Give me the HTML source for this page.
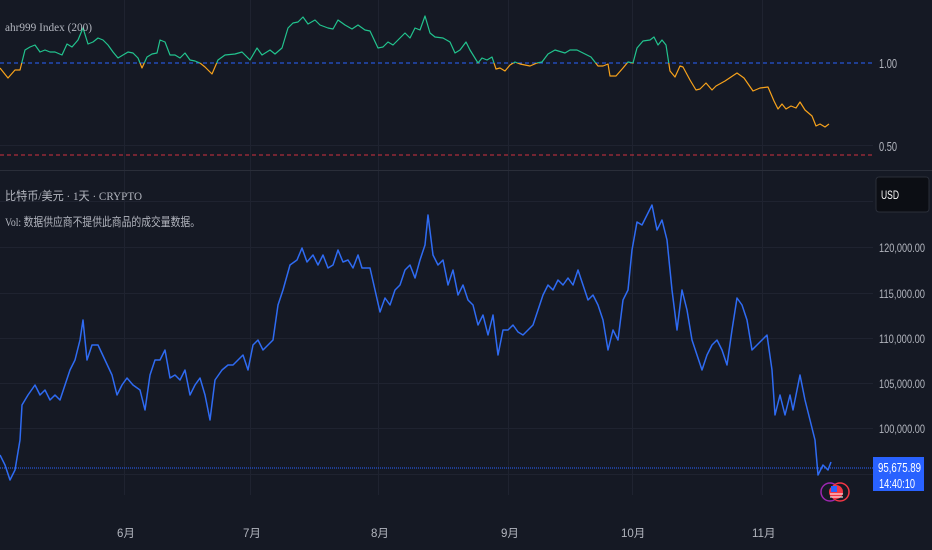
<!DOCTYPE html>
<html><head><meta charset="utf-8"><style>
html,body{margin:0;padding:0;background:#151924;width:932px;height:550px;overflow:hidden}
svg{display:block}
text{font-family:"Liberation Sans","Noto Sans CJK SC",sans-serif;fill:#b2b5be;font-size:11.5px}
.lg{font-family:"Liberation Serif","Noto Sans CJK SC",serif;font-size:12px;fill:#b2b5be}
.ax{font-size:13px}
</style></head><body>
<svg width="932" height="550" viewBox="0 0 932 550">
<rect width="932" height="550" fill="#151924"/>
<g stroke="#1f2330" stroke-width="1">
<line x1="124.5" y1="0" x2="124.5" y2="495"/>
<line x1="250.5" y1="0" x2="250.5" y2="495"/>
<line x1="378.5" y1="0" x2="378.5" y2="495"/>
<line x1="508.5" y1="0" x2="508.5" y2="495"/>
<line x1="632.5" y1="0" x2="632.5" y2="495"/>
<line x1="762.5" y1="0" x2="762.5" y2="495"/>
<line x1="0" y1="145.5" x2="873" y2="145.5"/>
<line x1="0" y1="201.5" x2="873" y2="201.5"/>
<line x1="0" y1="247.5" x2="873" y2="247.5"/>
<line x1="0" y1="293.5" x2="873" y2="293.5"/>
<line x1="0" y1="338.5" x2="873" y2="338.5"/>
<line x1="0" y1="383.5" x2="873" y2="383.5"/>
<line x1="0" y1="428.5" x2="873" y2="428.5"/>
<line x1="0" y1="474.5" x2="873" y2="474.5"/>
</g>
<line x1="0" y1="170.5" x2="932" y2="170.5" stroke="#2a2e39" stroke-width="1"/>
<line x1="0" y1="63" x2="873" y2="63" stroke="#2962ff" stroke-width="1" stroke-dasharray="4 3"/>
<line x1="0" y1="155" x2="873" y2="155" stroke="#f23645" stroke-width="1" stroke-dasharray="4 3" opacity="0.85"/>
<defs>
<clipPath id="above"><rect x="0" y="0" width="873" height="63"/></clipPath>
<clipPath id="below"><rect x="0" y="63" width="873" height="100"/></clipPath>
</defs>
<g fill="none" stroke-width="1.2" stroke-linejoin="round">
<polyline clip-path="url(#below)" stroke="#f7a21b" points="0,68 8,78 15,70 20,70 25,50 30,47 35,45 40,52 45,50 50,52 55,52 62,55 67,44 72,47 78,40 83,28 88,44 93,42 98,38 103,40 108,45 113,52 118,58 123,55 128,52 133,53 138,58 142,68 147,57 152,54 157,53 160,40 165,42 170,55 175,55 180,58 185,53 190,60 195,61 200,63 205,67 212,74 218,60 225,55 235,54 242,52 250,60 257,48 262,55 270,50 275,54 282,48 288,28 293,23 298,22 303,17 308,24 315,20 320,25 328,28 333,29 338,20 345,25 352,29 358,25 365,30 370,31 378,48 383,47 388,42 393,45 398,40 405,33 410,38 415,28 420,30 425,16 430,33 435,37 443,38 450,42 455,53 460,50 466,42 470,50 478,63 482,58 487,60 492,57 496,69 500,68 505,71 510,65 515,62 520,64 530,66 537,63 542,62 548,54 555,50 565,53 570,50 577,50 585,54 591,57 598,66 603,66 608,64 610,76 616,76 623,68 628,62 633,63 637,48 643,41 650,40 654,37 658,45 662,40 666,45 670,71 675,77 680,66 683,67 690,80 696,90 700,89 706,83 712,90 716,86 725,81 737,73 744,78 753,91 760,88 768,87 774,101 778,109 782,104 786,109 791,106 796,108 800,102 805,110 812,116 816,126 820,124 825,127 829,124"/>
<polyline clip-path="url(#above)" stroke="#22c38e" points="0,68 8,78 15,70 20,70 25,50 30,47 35,45 40,52 45,50 50,52 55,52 62,55 67,44 72,47 78,40 83,28 88,44 93,42 98,38 103,40 108,45 113,52 118,58 123,55 128,52 133,53 138,58 142,68 147,57 152,54 157,53 160,40 165,42 170,55 175,55 180,58 185,53 190,60 195,61 200,63 205,67 212,74 218,60 225,55 235,54 242,52 250,60 257,48 262,55 270,50 275,54 282,48 288,28 293,23 298,22 303,17 308,24 315,20 320,25 328,28 333,29 338,20 345,25 352,29 358,25 365,30 370,31 378,48 383,47 388,42 393,45 398,40 405,33 410,38 415,28 420,30 425,16 430,33 435,37 443,38 450,42 455,53 460,50 466,42 470,50 478,63 482,58 487,60 492,57 496,69 500,68 505,71 510,65 515,62 520,64 530,66 537,63 542,62 548,54 555,50 565,53 570,50 577,50 585,54 591,57 598,66 603,66 608,64 610,76 616,76 623,68 628,62 633,63 637,48 643,41 650,40 654,37 658,45 662,40 666,45 670,71 675,77"/>
</g>
<text x="5" y="31" class="lg" textLength="87" lengthAdjust="spacingAndGlyphs">ahr999 Index (200)</text>
<text x="879" y="68" class="ax" textLength="18" lengthAdjust="spacingAndGlyphs">1.00</text>
<text x="879" y="151" class="ax" textLength="18" lengthAdjust="spacingAndGlyphs">0.50</text>
<rect x="876" y="177" width="53" height="35" rx="3" fill="#0c0e14" stroke="#2a2e39"/>
<text x="881" y="199" style="fill:#fff;font-size:12px" textLength="18" lengthAdjust="spacingAndGlyphs">USD</text>
<text x="5" y="200" class="lg" textLength="137" lengthAdjust="spacingAndGlyphs">比特币/美元 · 1天 · CRYPTO</text>
<text x="5" y="226" class="lg" textLength="195" lengthAdjust="spacingAndGlyphs">Vol: 数据供应商不提供此商品的成交量数据。</text>
<g class="ax">
<text x="879" y="252" textLength="46" lengthAdjust="spacingAndGlyphs">120,000.00</text>
<text x="879" y="298" textLength="46" lengthAdjust="spacingAndGlyphs">115,000.00</text>
<text x="879" y="343" textLength="46" lengthAdjust="spacingAndGlyphs">110,000.00</text>
<text x="879" y="388" textLength="46" lengthAdjust="spacingAndGlyphs">105,000.00</text>
<text x="879" y="433" textLength="46" lengthAdjust="spacingAndGlyphs">100,000.00</text>
</g>
<line x1="0" y1="468" x2="873" y2="468" stroke="#2962ff" stroke-width="1" stroke-dasharray="1 1"/>
<polyline fill="none" stroke="#2f6bf2" stroke-width="1.5" stroke-linejoin="round" points="0,455 5,465 10,480 15,470 20,440 22,405 28,395 35,385 40,395 45,390 50,400 55,395 60,400 65,385 70,370 75,360 80,340 83,320 87,360 92,345 98,345 105,360 112,375 117,395 122,385 127,378 133,385 140,390 145,410 150,375 155,360 160,360 165,350 170,378 175,375 180,380 185,370 190,395 195,385 200,378 205,395 210,420 215,380 222,370 228,365 233,365 238,360 243,355 248,370 253,345 258,340 263,350 268,345 273,340 278,305 283,290 290,265 297,260 302,248 307,262 313,255 318,265 323,255 328,268 333,265 338,250 343,262 348,260 353,268 358,255 362,268 370,268 375,290 380,312 385,298 390,305 395,290 400,285 405,270 410,265 415,278 420,260 425,245 428,215 433,255 438,265 443,260 448,285 453,270 458,295 463,285 468,300 473,305 478,325 483,315 488,335 493,315 498,355 503,330 508,330 513,325 518,332 523,335 528,330 533,325 538,310 543,295 548,285 553,290 558,280 563,285 568,278 573,285 578,270 583,285 588,300 593,295 598,305 603,320 608,350 613,330 618,340 623,300 628,290 632,250 637,222 642,225 647,215 652,205 657,230 662,220 667,240 672,290 677,330 682,290 687,310 692,340 697,355 702,370 707,355 712,345 717,340 722,350 727,365 732,330 737,298 742,305 747,320 752,350 757,345 762,340 767,335 772,370 775,415 780,395 785,415 790,395 793,410 798,385 800,375 805,400 810,420 815,440 818,475 823,465 828,470 831,462"/>
<circle cx="830" cy="492" r="9" fill="#151924" stroke="#9c27b0" stroke-width="1.5"/>
<circle cx="840" cy="492" r="9" fill="#151924" stroke="#f23645" stroke-width="1.5"/>
<circle cx="836" cy="492" r="7" fill="#f23645"/>
<rect x="831" y="486" width="6" height="6" fill="#2962ff"/>
<line x1="830" y1="494" x2="843" y2="494" stroke="#fff" stroke-width="1"/>
<line x1="830" y1="497" x2="843" y2="497" stroke="#fff" stroke-width="1"/>
<rect x="873" y="457" width="51" height="34" fill="#2962ff"/>
<text x="878" y="472" style="fill:#fff;font-size:12.5px" textLength="43" lengthAdjust="spacingAndGlyphs">95,675.89</text>
<text x="879" y="488" style="fill:#fff;font-size:12.5px" textLength="36" lengthAdjust="spacingAndGlyphs">14:40:10</text>
<g class="ax">
<text x="117" y="537">6月</text>
<text x="243" y="537">7月</text>
<text x="371" y="537">8月</text>
<text x="501" y="537">9月</text>
<text x="621" y="537">10月</text>
<text x="752" y="537">11月</text>
</g>
</svg>
</body></html>
